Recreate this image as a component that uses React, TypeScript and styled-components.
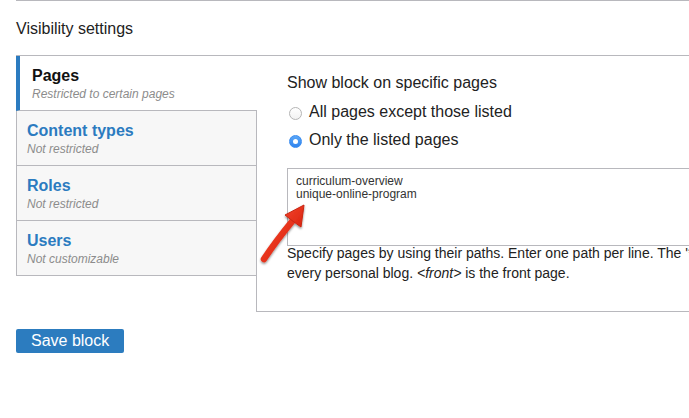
import React from "react";
import styled, { createGlobalStyle } from "styled-components";

const Global = createGlobalStyle`
  html, body { margin: 0; padding: 0; background: #fff; overflow: hidden; }
  body { font-family: "Liberation Sans", Arial, Helvetica, sans-serif; color: #222; }
`;

const Page = styled.div`
  position: relative;
  width: 760px;
  height: 418px;
  padding-left: 16px;
  box-sizing: border-box;
`;

const TopRule = styled.div`
  height: 1px;
  background: #b8b8bd;
`;

const Heading = styled.h2`
  margin: 0;
  padding-top: 18px;
  font-size: 16px;
  line-height: 20px;
  font-weight: normal;
  color: #222;
`;

const VerticalTabs = styled.div`
  display: flex;
  align-items: flex-start;
  margin-top: 16px;
  border-top: 1px solid #b8b8bd;
`;

const TabList = styled.ul`
  list-style: none;
  margin: 0 -1px 0 0;
  padding: 0;
  width: 241px;
  flex-shrink: 0;
  position: relative;
  z-index: 1;
`;

const Tab = styled.li<{ $active?: boolean }>`
  box-sizing: border-box;
  height: 55px;
  padding: 10px 0 0 ${(p) => (p.$active ? "12px" : "10px")};
  border-bottom: 1px solid #b8b8bd;
  border-left: ${(p) => (p.$active ? "4px solid #2b7bc0" : "1px solid #b8b8bd")};
  border-right: ${(p) => (p.$active ? "none" : "1px solid #b8b8bd")};
  background: ${(p) => (p.$active ? "#fff" : "#f7f7f7")};
`;

const TabTitle = styled.div<{ $active?: boolean }>`
  font-size: 16px;
  line-height: 20px;
  font-weight: bold;
  color: ${(p) => (p.$active ? "#111" : "#2b7bc0")};
`;

const TabSummary = styled.div`
  font-size: 12px;
  line-height: 16px;
  font-style: italic;
  color: #8c8c8c;
`;

const Pane = styled.div`
  flex: 1;
  height: 256px;
  box-sizing: border-box;
  border-left: 1px solid #b8b8bd;
  border-bottom: 1px solid #b8b8bd;
  padding: 17px 0 0 30px;
  position: relative;
`;

const Label = styled.div`
  font-size: 16px;
  line-height: 20px;
  color: #222;
`;

const RadioGroup = styled.div`
  margin-top: 5px;
  display: flex;
  flex-direction: column;
`;

const RadioRow = styled.label`
  display: flex;
  align-items: center;
  gap: 7px;
  height: 28px;
  font-size: 16px;
  color: #222;
  padding-left: 2px;
`;

const Radio = styled.span<{ $checked?: boolean }>`
  box-sizing: border-box;
  width: 13px;
  height: 13px;
  border-radius: 50%;
  flex-shrink: 0;
  position: relative;
  top: 1px;
  border: ${(p) => (p.$checked ? "1px solid #3a8cf0" : "1px solid #b5b5b5")};
  background: ${(p) =>
    p.$checked ? "linear-gradient(#5aa6f7, #2f84ee)" : "linear-gradient(#fff, #f2f2f2)"};
  &::after {
    content: "";
    display: ${(p) => (p.$checked ? "block" : "none")};
    position: absolute;
    left: 50%;
    top: 50%;
    width: 5px;
    height: 5px;
    margin: -2.5px 0 0 -2.5px;
    border-radius: 50%;
    background: #fff;
  }
`;

const TextArea = styled.div`
  margin-top: 14px;
  box-sizing: border-box;
  width: 440px;
  height: 78px;
  border: 1px solid #b8b8bd;
  padding: 6px 8px;
  font-size: 12px;
  line-height: 13px;
  color: #333;
  white-space: pre;
`;

const Help = styled.div`
  margin-top: -2px;
  font-size: 14px;
  line-height: 19.5px;
  color: #222;
  white-space: nowrap;
`;

const Button = styled.button`
  margin-top: 17px;
  display: block;
  height: 24px;
  padding: 0 15px;
  border: none;
  border-radius: 2px;
  background: #2c7cbf;
  color: #fff;
  font-family: "Liberation Sans", Arial, sans-serif;
  font-size: 16px;
  line-height: 24px;
`;

const Arrow = styled.svg`
  position: absolute;
  left: 250px;
  top: 195px;
  overflow: visible;
`;

export default function App() {
  return (
    <Page>
      <Global />
      <TopRule />
      <Heading>Visibility settings</Heading>
      <VerticalTabs>
        <TabList>
          <Tab $active>
            <TabTitle $active>Pages</TabTitle>
            <TabSummary>Restricted to certain pages</TabSummary>
          </Tab>
          <Tab>
            <TabTitle>Content types</TabTitle>
            <TabSummary>Not restricted</TabSummary>
          </Tab>
          <Tab>
            <TabTitle>Roles</TabTitle>
            <TabSummary>Not restricted</TabSummary>
          </Tab>
          <Tab>
            <TabTitle>Users</TabTitle>
            <TabSummary>Not customizable</TabSummary>
          </Tab>
        </TabList>
        <Pane>
          <Label>Show block on specific pages</Label>
          <RadioGroup>
            <RadioRow>
              <Radio />
              All pages except those listed
            </RadioRow>
            <RadioRow>
              <Radio $checked />
              Only the listed pages
            </RadioRow>
          </RadioGroup>
          <TextArea>{"curriculum-overview\nunique-online-program"}</TextArea>
          <Help>
            Specify pages by using their paths. Enter one path per line. The '*' character is a wildcard. An example path is /blog/* for
            <br />
            every personal blog. <i>&lt;front&gt;</i> is the front page.
          </Help>
        </Pane>
      </VerticalTabs>
      <Button>Save block</Button>
      <Arrow width="70" height="80" viewBox="0 0 70 80">
        <defs>
          <filter id="sh" x="-30%" y="-30%" width="160%" height="160%">
            <feDropShadow dx="0" dy="1.5" stdDeviation="1.2" floodColor="#000" floodOpacity="0.45" />
          </filter>
          <linearGradient id="rg" x1="0" y1="0" x2="1" y2="1">
            <stop offset="0" stopColor="#f4442c" />
            <stop offset="1" stopColor="#d9230f" />
          </linearGradient>
        </defs>
        <g filter="url(#sh)">
          <path
            d="M14 64 Q26 46 42 26.5"
            stroke="url(#rg)"
            strokeWidth="6.5"
            strokeLinecap="round"
            fill="none"
          />
          <path d="M54 10 L51 32 L44 27 L35 20 Z" fill="url(#rg)" stroke="#c92612" strokeWidth="1" strokeLinejoin="round" />
        </g>
      </Arrow>
    </Page>
  );
}
